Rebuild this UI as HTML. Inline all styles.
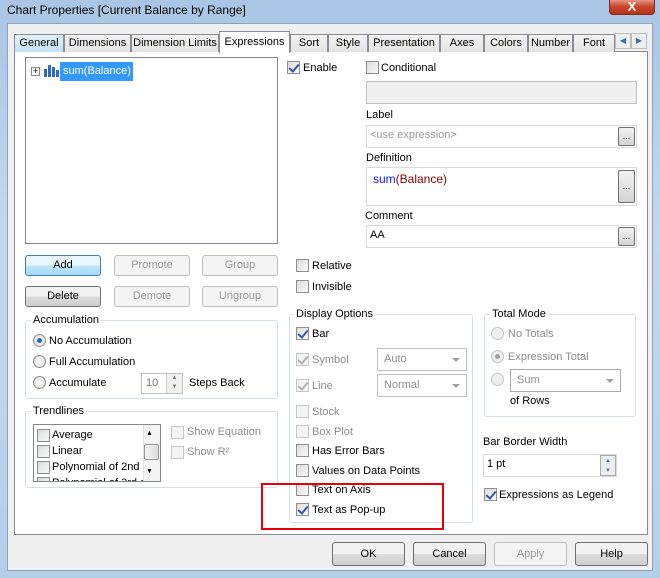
<!DOCTYPE html>
<html><head><style>
*{box-sizing:border-box;margin:0;padding:0}
body{width:660px;height:578px;position:relative;overflow:hidden;background:linear-gradient(#a9c6e4,#c3d8ee 40%,#b6cfe9);font-family:"Liberation Sans",sans-serif;font-size:11px;color:#000}
.a{position:absolute}
.t{position:absolute;white-space:nowrap;line-height:14px}
.g{color:#8d8d8d}
.cb{position:absolute;width:13px;height:13px;border:1px solid #8e8f8f;background:linear-gradient(135deg,#dcdcdc,#fafafa)}
.cb.d{border-color:#c5c5c5;background:#f4f4f4}
.ck::after{content:"";position:absolute;left:3px;top:0px;width:4px;height:8px;border:solid #3a54a0;border-width:0 2px 2px 0;transform:rotate(40deg)}
.ck.d::after{border-color:#b0b0b0}
.rd{position:absolute;width:13px;height:13px;border-radius:50%;border:1px solid #8e8f8f;background:radial-gradient(#fff,#d8d8d8)}
.rd.d{border-color:#c5c5c5;background:#eee}
.rd.on::after{content:"";position:absolute;left:3px;top:3px;width:5px;height:5px;border-radius:50%;background:#1c6fbf}
.rd.on.d::after{background:#a0a0a0}
.btn{position:absolute;border:1px solid #707070;border-radius:3px;background:linear-gradient(#f2f2f2 50%,#dcdcdc 50%,#cfcfcf);text-align:center;line-height:19px;white-space:nowrap}
.btn.d{border-color:#c0c0c0;background:#f4f4f4;color:#9a9a9a}
.box{position:absolute;border:1px solid #abadb3;background:#fff}
.grp{position:absolute;border:1px solid #d5dfe5;border-radius:3px}
.gl{position:absolute;background:#fff;padding:0 2px;line-height:14px;white-space:nowrap}
.tab{position:absolute;top:34px;height:18px;border:1px solid #898c95;border-bottom:none;background:linear-gradient(#f3f3f3,#e3e3e3);text-align:center;line-height:16px;white-space:nowrap;overflow:hidden}
.dd{position:absolute;border:1px solid #c0c0c0;background:#fff;color:#8d8d8d;padding-left:6px;line-height:20px}
.dd::after{content:"";position:absolute;right:6px;top:9px;border:4px solid transparent;border-top-color:#a0a0a0}
.eb{position:absolute;width:17px;border:1px solid #707070;border-radius:2px;background:linear-gradient(#f2f2f2,#d4d4d4);font-size:9px;text-align:center}
</style></head><body>
<div class="t" style="left:7px;top:3px;font-size:12px;color:#000">Chart Properties [Current Balance by Range]</div>
<div class="a" style="left:609px;top:-2px;width:46px;height:17px;border:1px solid #7a2a20;border-radius:0 0 4px 4px;background:linear-gradient(#e8a493,#c9462c 50%,#b73318);color:#fff;text-align:center;font-weight:bold;font-size:13px;line-height:15px">X</div>
<div class="a" style="left:7px;top:23px;width:646px;height:548px;background:#f0f0f0;border:1px solid #8ba3bd"></div>
<div class="a" style="left:14px;top:51px;width:634px;height:484px;background:#fff;border:1px solid #898c95"></div>
<div class="tab" style="left:14px;width:50px;background:linear-gradient(#e4f2fb,#c2e0f5)">General</div>
<div class="tab" style="left:64px;width:67px">Dimensions</div>
<div class="tab" style="left:131px;width:88px">Dimension Limits</div>
<div class="tab" style="left:219px;top:31px;height:22px;width:71px;background:#fff;line-height:20px;z-index:2">Expressions</div>
<div class="tab" style="left:290px;width:38px">Sort</div>
<div class="tab" style="left:328px;width:40px">Style</div>
<div class="tab" style="left:368px;width:72px">Presentation</div>
<div class="tab" style="left:440px;width:44px">Axes</div>
<div class="tab" style="left:484px;width:44px">Colors</div>
<div class="tab" style="left:528px;width:45px">Number</div>
<div class="tab" style="left:573px;width:42px">Font</div>
<div class="a" style="left:615px;top:33px;width:16px;height:16px;border:1px solid #bbb;background:#eee;color:#3a6fb0;font-size:8px;text-align:center;line-height:14px">◀</div>
<div class="a" style="left:631px;top:33px;width:16px;height:16px;border:1px solid #bbb;background:#eee;color:#3a6fb0;font-size:8px;text-align:center;line-height:14px">▶</div>
<div class="box" style="left:25px;top:57px;width:253px;height:187px;border-color:#828790"></div>
<div class="a" style="left:31px;top:67px;width:9px;height:9px;border:1px solid #888;background:#fff;font-size:9px;line-height:7px;text-align:center">+</div>
<div class="a" style="left:44px;top:69px;width:3px;height:8px;background:#2e68c0"></div>
<div class="a" style="left:48px;top:65px;width:3px;height:12px;background:#2e68c0"></div>
<div class="a" style="left:52px;top:67px;width:3px;height:10px;background:#2e68c0"></div>
<div class="a" style="left:56px;top:70px;width:3px;height:7px;background:#2e68c0"></div>
<div class="a" style="left:60px;top:62px;width:73px;height:19px;background:#3399ff;color:#fff;line-height:19px;padding-left:3px;white-space:nowrap">sum(Balance)</div>
<div class="btn" style="left:25px;top:255px;width:76px;height:21px;border-color:#3c7fb1;background:linear-gradient(#eaf6fd 50%,#bee6fd 50%,#a7d9f5)">Add</div>
<div class="btn d" style="left:114px;top:255px;width:76px;height:21px">Promote</div>
<div class="btn d" style="left:202px;top:255px;width:76px;height:21px">Group</div>
<div class="btn" style="left:25px;top:286px;width:76px;height:21px">Delete</div>
<div class="btn d" style="left:114px;top:286px;width:76px;height:21px">Demote</div>
<div class="btn d" style="left:202px;top:286px;width:76px;height:21px">Ungroup</div>
<div class="grp" style="left:25px;top:320px;width:253px;height:79px"></div>
<div class="gl" style="left:31px;top:313px">Accumulation</div>
<div class="rd on" style="left:33px;top:334px"></div><div class="t" style="left:49px;top:334px">No Accumulation</div>
<div class="rd" style="left:33px;top:355px"></div><div class="t" style="left:49px;top:355px">Full Accumulation</div>
<div class="rd" style="left:33px;top:376px"></div><div class="t" style="left:49px;top:376px">Accumulate</div>
<div class="box" style="left:141px;top:373px;width:42px;height:21px;border-color:#c0c0c0;color:#777;padding-left:4px;line-height:19px">10</div>
<div class="a" style="left:166px;top:374px;width:16px;height:19px;border-left:1px solid #ccc;background:#f0f0f0;font-size:6px;color:#777;text-align:center;line-height:9px">▲<br>▼</div>
<div class="t" style="left:189px;top:376px">Steps Back</div>
<div class="grp" style="left:25px;top:411px;width:253px;height:77px"></div>
<div class="gl" style="left:31px;top:404px">Trendlines</div>
<div class="box" style="left:33px;top:424px;width:128px;height:58px;border-color:#828790;overflow:hidden">
<div class="cb" style="left:3px;top:4px"></div><div class="t" style="left:18px;top:3px">Average</div>
<div class="cb" style="left:3px;top:20px"></div><div class="t" style="left:18px;top:19px">Linear</div>
<div class="cb" style="left:3px;top:36px"></div><div class="t" style="left:18px;top:35px">Polynomial of 2nd d</div>
<div class="cb" style="left:3px;top:52px"></div><div class="t" style="left:18px;top:51px">Polynomial of 3rd d</div>
<div class="a" style="left:109px;top:0;width:17px;height:56px;background:#f4f4f4;border-left:1px solid #e0e0e0"></div>
<div class="a" style="left:110px;top:19px;width:15px;height:16px;border:1px solid #999;border-radius:2px;background:linear-gradient(90deg,#f4f4f4,#dcdcdc)"></div>
<div class="t" style="left:112px;top:2px;font-size:7px">▲</div><div class="t" style="left:112px;top:40px;font-size:7px">▼</div>
</div>
<div class="cb d" style="left:171px;top:426px"></div><div class="t g" style="left:187px;top:425px">Show Equation</div>
<div class="cb d" style="left:171px;top:446px"></div><div class="t g" style="left:187px;top:445px">Show R²</div>
<div class="cb ck" style="left:287px;top:61px"></div><div class="t" style="left:303px;top:61px">Enable</div>
<div class="cb" style="left:366px;top:61px"></div><div class="t" style="left:381px;top:61px">Conditional</div>
<div class="a" style="left:366px;top:81px;width:271px;height:23px;border:1px solid #c0c0c0;background:#f0f0f0"></div>
<div class="t" style="left:366px;top:108px">Label</div>
<div class="box" style="left:366px;top:125px;width:271px;height:23px;border-color:#dadada;color:#999;padding-left:3px;line-height:19px">&lt;use expression&gt;</div>
<div class="eb" style="left:618px;top:127px;height:19px;line-height:17px">...</div>
<div class="t" style="left:366px;top:151px">Definition</div>
<div class="box" style="left:366px;top:167px;width:271px;height:39px;border-color:#dadada;padding-left:6px;padding-top:4px;font-size:12px"><span style="color:#1515ff">sum</span><span style="color:#8b0000">(Balance)</span></div>
<div class="eb" style="left:618px;top:170px;height:33px;line-height:31px">...</div>
<div class="t" style="left:365px;top:209px">Comment</div>
<div class="box" style="left:366px;top:225px;width:271px;height:23px;border-color:#dadada;padding-left:3px;line-height:19px">AA</div>
<div class="eb" style="left:618px;top:227px;height:19px;line-height:17px">...</div>
<div class="cb" style="left:296px;top:259px"></div><div class="t" style="left:312px;top:259px">Relative</div>
<div class="cb" style="left:296px;top:280px"></div><div class="t" style="left:312px;top:280px">Invisible</div>
<div class="grp" style="left:289px;top:314px;width:184px;height:209px"></div>
<div class="gl" style="left:294px;top:307px">Display Options</div>
<div class="cb ck" style="left:296px;top:327px"></div><div class="t" style="left:312px;top:327px">Bar</div>
<div class="cb ck d" style="left:296px;top:353px"></div><div class="t g" style="left:312px;top:353px">Symbol</div>
<div class="dd" style="left:377px;top:348px;width:90px;height:23px">Auto</div>
<div class="cb ck d" style="left:296px;top:379px"></div><div class="t g" style="left:312px;top:379px">Line</div>
<div class="dd" style="left:377px;top:374px;width:90px;height:23px">Normal</div>
<div class="cb d" style="left:296px;top:405px"></div><div class="t g" style="left:312px;top:405px">Stock</div>
<div class="cb d" style="left:296px;top:425px"></div><div class="t g" style="left:312px;top:425px">Box Plot</div>
<div class="cb" style="left:296px;top:444px"></div><div class="t" style="left:312px;top:444px">Has Error Bars</div>
<div class="cb" style="left:296px;top:464px"></div><div class="t" style="left:312px;top:464px">Values on Data Points</div>
<div class="cb" style="left:296px;top:483px"></div><div class="t" style="left:312px;top:483px">Text on Axis</div>
<div class="cb ck" style="left:296px;top:503px"></div><div class="t" style="left:312px;top:503px">Text as Pop-up</div>
<div class="a" style="left:261px;top:483px;width:183px;height:47px;border:2px solid #e8000b"></div>
<div class="grp" style="left:484px;top:314px;width:152px;height:103px"></div>
<div class="gl" style="left:490px;top:307px">Total Mode</div>
<div class="rd d" style="left:491px;top:327px"></div><div class="t g" style="left:508px;top:327px">No Totals</div>
<div class="rd on d" style="left:491px;top:350px"></div><div class="t g" style="left:508px;top:350px">Expression Total</div>
<div class="rd d" style="left:491px;top:373px"></div>
<div class="dd" style="left:510px;top:369px;width:111px;height:23px;border-color:#aaa">Sum</div>
<div class="t" style="left:510px;top:394px">of Rows</div>
<div class="t" style="left:483px;top:435px">Bar Border Width</div>
<div class="box" style="left:483px;top:454px;width:134px;height:23px;border-color:#dadada;padding-left:3px;line-height:19px">1 pt</div>
<div class="a" style="left:600px;top:455px;width:16px;height:21px;background:#eee;border:1px solid #aaa;font-size:6px;color:#4a7ac0;text-align:center;line-height:10px">▲<br>▼</div>
<div class="cb ck" style="left:484px;top:488px"></div><div class="t" style="left:499px;top:488px">Expressions as Legend</div>
<div class="btn" style="left:332px;top:542px;width:73px;height:24px;line-height:22px">OK</div>
<div class="btn" style="left:413px;top:542px;width:73px;height:24px;line-height:22px">Cancel</div>
<div class="btn d" style="left:494px;top:542px;width:73px;height:24px;line-height:22px">Apply</div>
<div class="btn" style="left:575px;top:542px;width:73px;height:24px;line-height:22px">Help</div>
</body></html>
